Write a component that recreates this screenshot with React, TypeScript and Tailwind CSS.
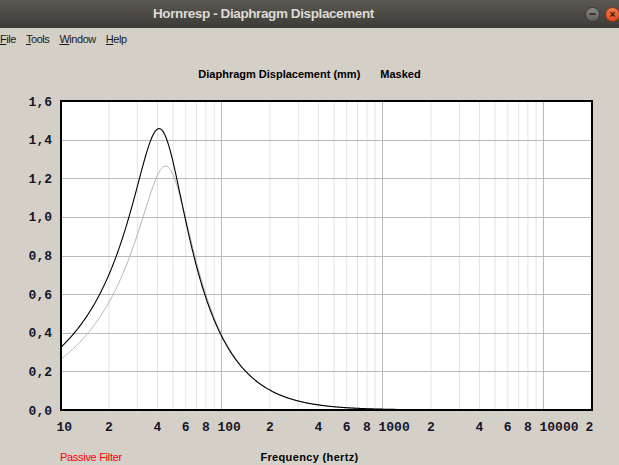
import React from "react";

const DEC = 161;
const X0 = 60.5;
const fx = (f: number) => X0 + (Math.log10(f) - 1) * DEC;
const vy = (v: number) => 410 - (v / 1.6) * 309;

function disp(f: number, K: number, f0: number, Q: number, fa: number) {
  const x = f / fa;
  const hp = x / Math.sqrt(1 + x * x);
  const r = f / f0;
  const re = 1 - r * r;
  const im = r / Q;
  return (K * hp) / Math.sqrt(re * re + im * im);
}

function curvePath(K: number, f0: number, Q: number, fa: number) {
  const pts: string[] = [];
  const n = 400;
  const l0 = 1;
  const l1 = Math.log10(1300);
  for (let i = 0; i <= n; i++) {
    const lf = l0 + ((l1 - l0) * i) / n;
    const f = Math.pow(10, lf);
    const v = disp(f, K, f0, Q, fa);
    pts.push(`${fx(f).toFixed(2)},${Math.min(vy(v), 409.5).toFixed(2)}`);
  }
  return "M" + pts.join(" L");
}

const C = 4252;
const blackPath = curvePath(C / (42.5 * 42.5), 42.5, 1.25, 75);
const grayPath = curvePath(C / (47 * 47), 47, 1.228, 75);

const minorLines: number[] = [];
[10, 100, 1000, 10000].forEach((d) => {
  for (let m = 2; m <= 9; m++) {
    if (d * m < 20000) minorLines.push(d * m);
  }
});
const majorLines = [100, 1000, 10000];
const hLines = [0.2, 0.4, 0.6, 0.8, 1.0, 1.2, 1.4];
const yLabels = ["0,0", "0,2", "0,4", "0,6", "0,8", "1,0", "1,2", "1,4", "1,6"];
const xLabels: [number, string][] = [
  [10, "10"],
  [20, "2"],
  [40, "4"],
  [60, "6"],
  [80, "8"],
  [100, "100"],
  [200, "2"],
  [400, "4"],
  [600, "6"],
  [800, "8"],
  [1000, "1000"],
  [2000, "2"],
  [4000, "4"],
  [6000, "6"],
  [8000, "8"],
  [10000, "10000"],
];

const mono = { fontFamily: '"Liberation Mono", "Courier New", monospace', fontWeight: 700, fontSize: 13 } as const;

export default function App() {
  return (
    <div className="w-[619px] h-[465px] overflow-hidden bg-[#d4d0c8] flex flex-col font-['Liberation_Sans',Arial,sans-serif]">
      {/* Title bar */}
      <div className="h-[28px] shrink-0 flex items-center bg-gradient-to-b from-[#5a5852] to-[#3d3c38]">
        <div className="pl-[153px] text-[13.5px] font-bold tracking-[-0.4px] text-[#dfdbd2] leading-[28px] whitespace-nowrap">
          Hornresp - Diaphragm Displacement
        </div>
        <div className="flex-1" />
        <div className="flex items-center gap-[5px] mr-[-1px]">
          <div className="w-[15px] h-[15px] rounded-full bg-gradient-to-b from-[#8a8984] to-[#5f5e5a] border border-[#3a3936] flex items-center justify-center">
            <div className="w-[7px] h-[2px] bg-[#3c3b37] rounded-sm" />
          </div>
          <div className="w-[15px] h-[15px] rounded-full bg-gradient-to-b from-[#f4794c] to-[#df4a18] border border-[#8c3414] flex items-center justify-center text-[#3c1a0c] text-[11px] font-bold leading-none">
            ×
          </div>
        </div>
      </div>

      {/* Menu bar */}
      <div className="h-[22px] shrink-0 flex items-center gap-[10px] text-[11px] tracking-[-0.45px] text-[#1a1a1a] leading-none">
        <span><span className="underline">F</span>ile</span>
        <span><span className="underline">T</span>ools</span>
        <span><span className="underline">W</span>indow</span>
        <span><span className="underline">H</span>elp</span>
      </div>

      {/* Chart title */}
      <div className="h-[40px] shrink-0 pt-[17px] flex justify-center gap-[20px] text-[11px] font-bold leading-[14px] text-black">
        <span>Diaphragm Displacement (mm)</span>
        <span>Masked</span>
      </div>

      {/* Chart */}
      <svg width="619" height="352" viewBox="0 90 619 352" className="shrink-0 block">
        <rect x="61" y="101" width="531" height="309" fill="#ffffff" />
        {minorLines.map((f) => (
          <line key={"m" + f} x1={fx(f)} x2={fx(f)} y1="101" y2="410" stroke="#e3e3e3" strokeWidth="1" />
        ))}
        {majorLines.map((f) => (
          <line key={"M" + f} x1={fx(f)} x2={fx(f)} y1="101" y2="410" stroke="#bababa" strokeWidth="1" />
        ))}
        {hLines.map((v) => (
          <line key={"h" + v} x1="61" x2="592" y1={Math.round(vy(v)) + 0.5} y2={Math.round(vy(v)) + 0.5} stroke="#bababa" strokeWidth="1" />
        ))}
        <path d={grayPath} fill="none" stroke="#b4b4b4" strokeWidth="1" />
        <path d={blackPath} fill="none" stroke="#000000" strokeWidth="1.1" />
        <rect x="61" y="101" width="531" height="309" fill="none" stroke="#000000" strokeWidth="2" />
        {yLabels.map((t, i) => (
          <text key={"y" + t} x="52" y={vy(i * 0.2) + 4.5} textAnchor="end" fill="#15152a" style={mono}>
            {t}
          </text>
        ))}
        {xLabels.map(([f, t], i) => (
          <text key={"x" + i} x={fx(f) - 4} y="430.5" fill="#15152a" style={mono}>
            {t}
          </text>
        ))}
        <text x="585.5" y="430.5" fill="#15152a" style={mono}>
          2
        </text>
      </svg>

      {/* Footer */}
      <div className="relative h-[23px] shrink-0 pt-[8px] leading-[14px]">
        <div className="flex justify-center text-[11px] font-bold tracking-[0.35px] text-black">
          Frequency (hertz)
        </div>
        <div className="absolute left-[60px] top-[8px] text-[11px] tracking-[-0.3px] text-[#ff0000]">
          Passive Filter
        </div>
      </div>
    </div>
  );
}
